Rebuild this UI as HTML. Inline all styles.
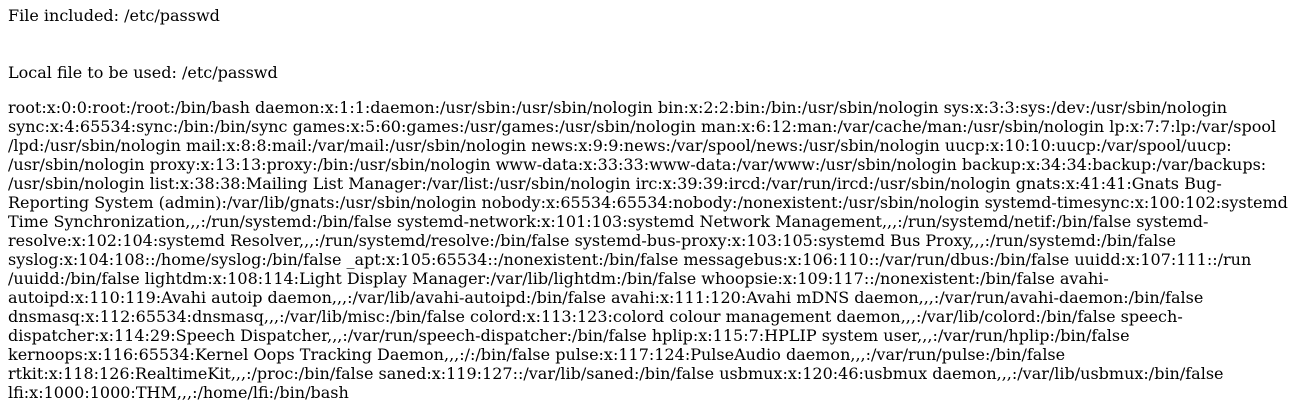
<!DOCTYPE html>
<html><head><meta charset="utf-8"><style>
html,body{margin:0;padding:0;background:#fff;}
body{font-family:"DejaVu Serif",serif;font-size:16px;color:#000;position:relative;width:1289px;height:417px;overflow:hidden}
.a{position:absolute;left:8px;white-space:nowrap}
.l{display:block;height:19px;line-height:19px}
</style></head><body>
<div class="a" style="top:6px"><span class="l">File included: /etc/passwd</span></div>
<div class="a" style="top:63px"><span class="l">Local file to be used: /etc/passwd</span></div>
<div class="a" style="top:98px">
<span class="l">root:x:0:0:root:/root:/bin/bash daemon:x:1:1:daemon:/usr/sbin:/usr/sbin/nologin bin:x:2:2:bin:/bin:/usr/sbin/nologin sys:x:3:3:sys:/dev:/usr/sbin/nologin</span>
<span class="l">sync:x:4:65534:sync:/bin:/bin/sync games:x:5:60:games:/usr/games:/usr/sbin/nologin man:x:6:12:man:/var/cache/man:/usr/sbin/nologin lp:x:7:7:lp:/var/spool</span>
<span class="l">/lpd:/usr/sbin/nologin mail:x:8:8:mail:/var/mail:/usr/sbin/nologin news:x:9:9:news:/var/spool/news:/usr/sbin/nologin uucp:x:10:10:uucp:/var/spool/uucp:</span>
<span class="l">/usr/sbin/nologin proxy:x:13:13:proxy:/bin:/usr/sbin/nologin www-data:x:33:33:www-data:/var/www:/usr/sbin/nologin backup:x:34:34:backup:/var/backups:</span>
<span class="l">/usr/sbin/nologin list:x:38:38:Mailing List Manager:/var/list:/usr/sbin/nologin irc:x:39:39:ircd:/var/run/ircd:/usr/sbin/nologin gnats:x:41:41:Gnats Bug-</span>
<span class="l">Reporting System (admin):/var/lib/gnats:/usr/sbin/nologin nobody:x:65534:65534:nobody:/nonexistent:/usr/sbin/nologin systemd-timesync:x:100:102:systemd</span>
<span class="l">Time Synchronization,,,:/run/systemd:/bin/false systemd-network:x:101:103:systemd Network Management,,,:/run/systemd/netif:/bin/false systemd-</span>
<span class="l">resolve:x:102:104:systemd Resolver,,,:/run/systemd/resolve:/bin/false systemd-bus-proxy:x:103:105:systemd Bus Proxy,,,:/run/systemd:/bin/false</span>
<span class="l">syslog:x:104:108::/home/syslog:/bin/false _apt:x:105:65534::/nonexistent:/bin/false messagebus:x:106:110::/var/run/dbus:/bin/false uuidd:x:107:111::/run</span>
<span class="l">/uuidd:/bin/false lightdm:x:108:114:Light Display Manager:/var/lib/lightdm:/bin/false whoopsie:x:109:117::/nonexistent:/bin/false avahi-</span>
<span class="l">autoipd:x:110:119:Avahi autoip daemon,,,:/var/lib/avahi-autoipd:/bin/false avahi:x:111:120:Avahi mDNS daemon,,,:/var/run/avahi-daemon:/bin/false</span>
<span class="l">dnsmasq:x:112:65534:dnsmasq,,,:/var/lib/misc:/bin/false colord:x:113:123:colord colour management daemon,,,:/var/lib/colord:/bin/false speech-</span>
<span class="l">dispatcher:x:114:29:Speech Dispatcher,,,:/var/run/speech-dispatcher:/bin/false hplip:x:115:7:HPLIP system user,,,:/var/run/hplip:/bin/false</span>
<span class="l">kernoops:x:116:65534:Kernel Oops Tracking Daemon,,,:/:/bin/false pulse:x:117:124:PulseAudio daemon,,,:/var/run/pulse:/bin/false</span>
<span class="l">rtkit:x:118:126:RealtimeKit,,,:/proc:/bin/false saned:x:119:127::/var/lib/saned:/bin/false usbmux:x:120:46:usbmux daemon,,,:/var/lib/usbmux:/bin/false</span>
<span class="l">lfi:x:1000:1000:THM,,,:/home/lfi:/bin/bash</span>
</div>
</body></html>
